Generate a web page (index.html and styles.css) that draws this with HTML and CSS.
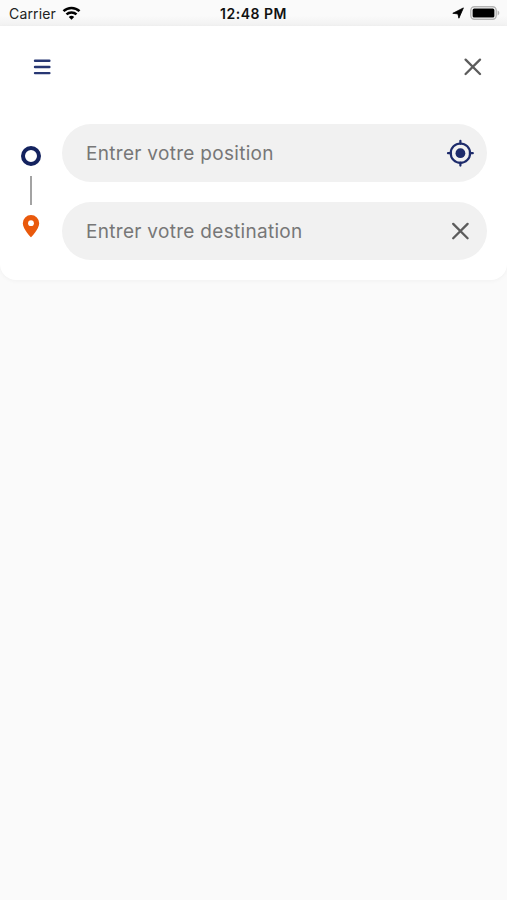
FILE: index.html
```html
<!DOCTYPE html>
<html lang="fr">
<head>
    <meta charset="UTF-8">
    <meta name="viewport" content="width=device-width, initial-scale=1.0">
    <title>Itinéraire</title>
    <link rel="stylesheet" href="styles.css">
</head>
<body>

    <div class="status-bar">
        <div class="status-left">
            <span class="carrier">Carrier</span>
            <svg class="wifi" width="19" height="14" viewBox="0 0 18 14" fill="none" stroke="#000" stroke-width="2.5">
                <path d="M1 5.1a11.6 11.6 0 0 1 16 0"/>
                <path d="M4 8.4a7.2 7.2 0 0 1 10 0"/>
                <path d="M9 13.7 6.3 11a3.9 3.9 0 0 1 5.4 0z" fill="#000" stroke="none"/>
            </svg>
        </div>
        <span class="time">12:48 PM</span>
        <div class="status-right">
            <svg width="12" height="12" viewBox="0 0 12 12">
                <path d="M11.4.9 6.9 11.2 5.9 6.9.8 6.3z" fill="#000" stroke="#000" stroke-width=".8" stroke-linejoin="round"/>
            </svg>
            <svg width="30" height="14" viewBox="0 0 30 14">
                <rect x=".8" y=".8" width="25.4" height="12.4" rx="3.6" fill="#fff" stroke="#b4b4b4" stroke-width="1.4"/>
                <rect x="2.6" y="2.4" width="21.8" height="9.2" rx="1.5" fill="#000"/>
                <path d="M27.6 4.6c2.3.8 2.3 4 0 4.8z" fill="#b4b4b4"/>
            </svg>
        </div>
    </div>

    <div class="search-card">
        <div class="toolbar">
            <button class="icon-button" title="Menu">
                <svg width="18" height="16" viewBox="0 0 18 16" stroke="#273773" stroke-width="2.4" stroke-linecap="round">
                    <path d="M2 1.8h14.4M2 8h14.4M2 14.1h14.4"/>
                </svg>
            </button>
            <button class="icon-button" title="Fermer">
                <svg width="18" height="18" viewBox="0 0 18 18" stroke="#5c5c5c" stroke-width="2.3" stroke-linecap="round">
                    <path d="M1.6 1.6l14.4 14.4M16 1.6L1.6 16"/>
                </svg>
            </button>
        </div>

        <div class="route">
            <div class="route-markers">
                <span class="origin"></span>
                <span class="line"></span>
                <svg width="18" height="24" viewBox="0 0 18 24">
                    <path d="M9 1a8.2 8.2 0 0 0-8.2 8.2C.8 15.2 9 23.2 9 23.2s8.2-8 8.2-14A8.2 8.2 0 0 0 9 1z" fill="#e9590c"/>
                    <circle cx="9" cy="9.2" r="2.9" fill="#fff"/>
                </svg>
            </div>

            <div class="route-fields">
                <div class="field">
                    <input type="text" placeholder="Entrer votre position">
                    <button class="icon-button" title="Ma position">
                        <svg width="28" height="28" viewBox="0 0 28 28" fill="none" stroke="#1d2b6b" stroke-width="2.2">
                            <circle cx="14.4" cy="14.2" r="9.7"/>
                            <circle cx="14.4" cy="14.2" r="4.9" fill="#1d2b6b" stroke="none"/>
                            <path d="M14.4 1.8v3M14.4 23.6v3M2 14.2h3M23.8 14.2h3" stroke-linecap="round"/>
                        </svg>
                    </button>
                </div>
                <div class="field">
                    <input type="text" placeholder="Entrer votre destination">
                    <button class="icon-button" title="Effacer">
                        <svg width="28" height="18" viewBox="0 0 28 18" stroke="#5c5c5c" stroke-width="2.3" stroke-linecap="round">
                            <path d="M7.2 1.9l14.4 14.4M21.6 1.9L7.2 16.3"/>
                        </svg>
                    </button>
                </div>
            </div>
        </div>
    </div>

</body>
</html>
```

FILE: styles.css
```css
body {
    margin: 0;
    min-height: 100vh;
    background-color: #fafafa;
    font-family: Inter, "Liberation Sans", sans-serif;
}

svg {
    display: block;
}

/* Status bar */
.status-bar {
    display: grid;
    grid-template-columns: 1fr auto 1fr;
    align-items: center;
    height: 26px;
    padding: 0 7px 0 9px;
    box-sizing: border-box;
    background: linear-gradient(#fafafa 60%, #f1f1f1);
    font-size: 14px;
    color: #222;
}

.status-left,
.status-right {
    display: flex;
    align-items: center;
}

.status-left {
    gap: 6px;
}

.status-right {
    justify-content: flex-end;
    gap: 6px;
}

.carrier {
    letter-spacing: 0.15px;
}

.time {
    margin-right: 2px;
    font-weight: 600;
    letter-spacing: 0.5px;
    color: #111;
}

/* Search card */
.search-card {
    height: 254px;
    background-color: #fff;
    border-radius: 0 0 16px 16px;
    box-shadow: 0 1px 4px rgba(0, 0, 0, 0.04);
}

.toolbar {
    display: flex;
    justify-content: space-between;
    align-items: center;
    height: 82px;
    padding: 0 25px 0 33px;
}

.icon-button {
    padding: 0;
    border: none;
    background: none;
    cursor: pointer;
}

.route {
    display: flex;
    padding: 15.5px 20px 0 21px;
}

.route-markers {
    display: flex;
    flex-direction: column;
    align-items: center;
    width: 20px;
    margin-right: 21px;
    padding-top: 22.5px;
}

.origin {
    width: 12px;
    height: 12px;
    border: 4px solid #14235f;
    border-radius: 50%;
}

.line {
    width: 2px;
    height: 29px;
    margin: 10px 0 9px;
    background-color: #a3a3a3;
}

.route-fields {
    display: flex;
    flex: 1;
    flex-direction: column;
    gap: 20px;
}

.field {
    display: flex;
    align-items: center;
    height: 58px;
    padding: 0 13px 0 24px;
    border-radius: 29px;
    background-color: #f1f1f1;
}

.field input {
    flex: 1;
    min-width: 0;
    padding: 1px 0 0;
    border: none;
    outline: none;
    background: none;
    font-family: inherit;
    font-size: 19px;
    letter-spacing: 0.3px;
    color: #333;
}

.field input::placeholder {
    color: #777;
}
```
